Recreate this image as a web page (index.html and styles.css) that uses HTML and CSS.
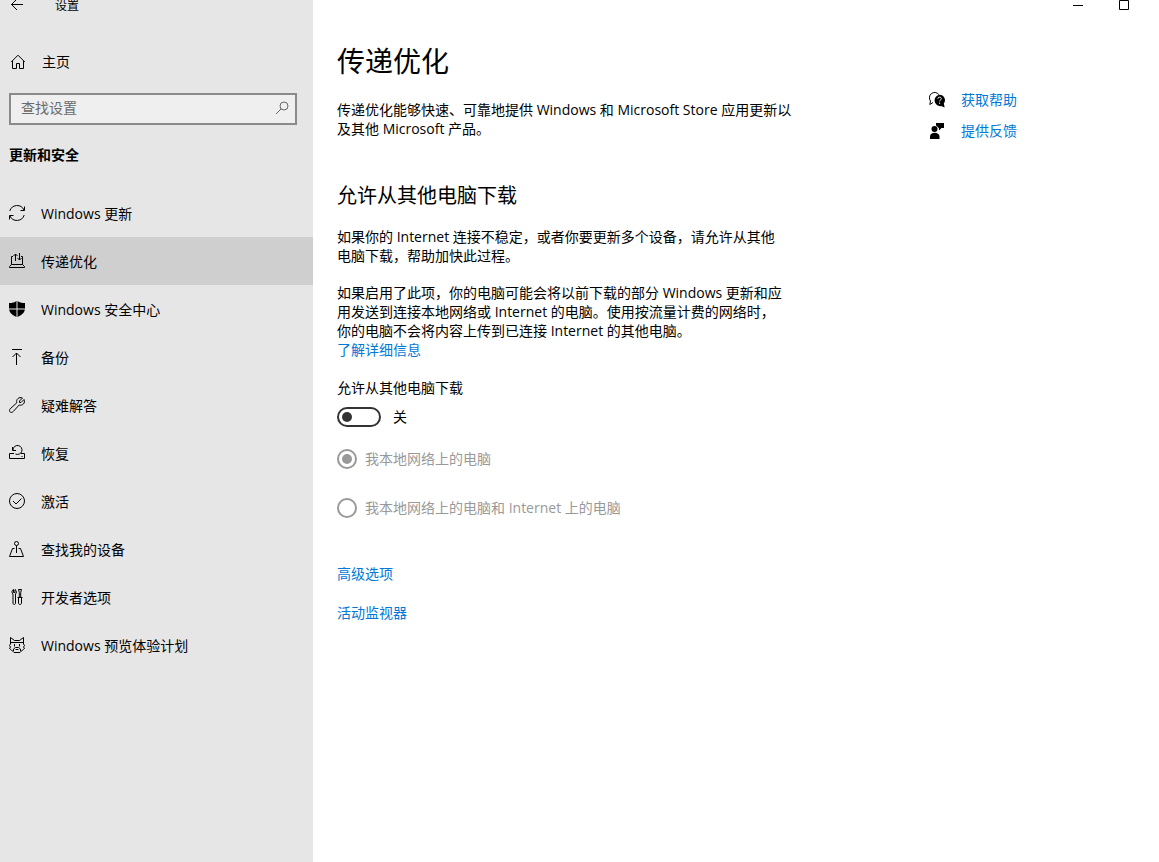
FILE: index.html
```html
<!DOCTYPE html>
<html lang="zh-CN">
<head>
<meta charset="utf-8">
<meta name="viewport" content="width=device-width, initial-scale=1">
<title>设置</title>
<link rel="stylesheet" href="styles.css">
</head>
<body>
<div class="app">
  <aside class="sidebar">
    <header class="titlebar">
      <button class="back" type="button" aria-label="返回">
        <svg class="icon" viewBox="0 0 16 16"><path d="M14 6.500H2.500M8 1L2.500 6.500 8 12"/></svg>
      </button>
      <span class="app-name">设置</span>
    </header>
    <a class="nav-item home" href="#">
      <svg class="icon" viewBox="0 0 16 16"><path d="M1.200 8L8 1.200 14.800 8M2.500 7v7.500h4v-5h3v5h4V7"/></svg>
      <span>主页</span>
    </a>
    <div class="search">
      <input class="search-input" type="search" placeholder="查找设置" aria-label="查找设置">
      <svg class="search-icon" viewBox="0 0 16 16"><circle cx="10" cy="6" r="4"/><path d="M7 9l-5 5"/></svg>
    </div>
    <h2 class="group">更新和安全</h2>
    <nav class="nav">
      <a class="nav-item" href="#">
        <svg class="icon" viewBox="0 0 16 16"><path d="M.8 6A7.600 7.600 0 0 1 15 5M15.500 1.500v4H11.500M15.200 10A7.600 7.600 0 0 1 1 11M.5 14.500v-4h4"/></svg>
        <span>Windows 更新</span>
      </a>
      <a class="nav-item selected" href="#" aria-current="page">
        <svg class="icon" viewBox="0 0 16 16"><path d="M4 3.500H2.500v8L.5 13.500v1h15v-1l-2-2v-8H12M2.500 11.500h11M6.500 8V1M4.500 3l2-2 2 2M10.500 0v7M8.500 5l2 2 2-2"/></svg>
        <span>传递优化</span>
      </a>
      <a class="nav-item" href="#">
        <svg class="icon solid" viewBox="0 0 16 16"><path d="M7.500 0v7.500H0V2C3.500 2 5.500 1.500 7.500 0zM8.500 0c2 1.500 4 2 7.500 2v5.500H8.500zM.1 8.500h7.400V16C3.500 14 .6 12 .1 8.500zM8.500 8.500h7.400C15.400 12 12.500 14 8.500 16z"/></svg>
        <span>Windows 安全中心</span>
      </a>
      <a class="nav-item" href="#">
        <svg class="icon" viewBox="0 0 16 16"><path d="M3 .5h10M7.500 16V4M3.500 8l4-4 4 4"/></svg>
        <span>备份</span>
      </a>
      <a class="nav-item" href="#">
        <svg class="icon" viewBox="0 0 16 16"><path d="M13.500 1L10.500 4v1.500H12L15 2.500c1.500 3.500-1.300 6.500-4.800 5.500L4.200 14.500C2 17-1 14 1.200 11.800L7.800 5.800C6.800 2.300 10 -.5 13.500 1z"/></svg>
        <span>疑难解答</span>
      </a>
      <a class="nav-item" href="#">
        <svg class="icon" viewBox="0 0 16 16"><path d="M5 8.500H.5v5h15v-5H12M4 5a4.500 4.500 0 1 1 2.500 4M3.500 2v3.500H7M12.500 11.500h1"/></svg>
        <span>恢复</span>
      </a>
      <a class="nav-item" href="#">
        <svg class="icon" viewBox="0 0 16 16"><circle cx="8" cy="8" r="7.500"/><path d="M4 8l3 3 5.500-5.500"/></svg>
        <span>激活</span>
      </a>
      <a class="nav-item" href="#">
        <svg class="icon" viewBox="0 0 16 16"><circle cx="7.500" cy="2.500" r="2"/><path d="M7.500 4.500V12M5.500 7.500h-2l-3 8h14l-3-8h-2"/></svg>
        <span>查找我的设备</span>
      </a>
      <a class="nav-item" href="#">
        <svg class="icon" viewBox="0 0 16 16"><path d="M4.500.5v3h1.500v-3c1.800 1 1.800 3.500.5 4.500v9c0 2-2.500 2-2.500 0V5C2.500 4 2.500 1.500 4.500.5zM9.500.5h3l-.8 3v5M9.500.5l.8 3v5M8.500 8.500h5M9.500 8.500V14c0 2 3 2 3 0V8.500"/></svg>
        <span>开发者选项</span>
      </a>
      <a class="nav-item" href="#">
        <svg class="icon" viewBox="0 0 16 16"><path d="M1.500 7V.5L5.500 3.500h5l4-3V7M1.500 5.500h13M1.500 7L.5 8.500l1 1.500-1 1.500L2.500 13l2.500 2.500h6l2.500-2.500 2-1.500-1-1.500 1-1.500-1-1.500M5.500 7v2.500M10.500 7v2.500M4.500 14v-2l2-1.500h3l2 1.500v2M6.500 12.500h3"/></svg>
        <span>Windows 预览体验计划</span>
      </a>
    </nav>
  </aside>

  <div class="page">
    <header class="window-bar">
      <button class="window-button" type="button" aria-label="最小化"><svg class="window-icon" viewBox="0 0 10 10"><path d="M0 5.500h10"/></svg></button>
      <button class="window-button" type="button" aria-label="最大化"><svg class="window-icon" viewBox="0 0 10 10"><path d="M.5.5h9v9h-9z"/></svg></button>
    </header>
    <div class="columns">
      <main class="content">
        <h1 class="title">传递优化</h1>
        <p class="text intro">传递优化能够快速、可靠地提供 Windows 和 Microsoft Store 应用更新以<br>及其他 Microsoft 产品。</p>
        <h2 class="subtitle">允许从其他电脑下载</h2>
        <p class="text">如果你的 Internet 连接不稳定，或者你要更新多个设备，请允许从其他<br>电脑下载，帮助加快此过程。</p>
        <p class="text">如果启用了此项，你的电脑可能会将以前下载的部分 Windows 更新和应<br>用发送到连接本地网络或 Internet 的电脑。使用按流量计费的网络时，<br>你的电脑不会将内容上传到已连接 Internet 的其他电脑。<br><a class="link" href="#">了解详细信息</a></p>
        <div class="setting">
          <label for="allow">允许从其他电脑下载</label>
          <div class="switch-row">
            <input class="switch" type="checkbox" role="switch" id="allow">
            <span>关</span>
          </div>
        </div>
        <div class="options" role="radiogroup" aria-label="下载来源">
          <label class="option"><input class="radio" type="radio" name="source" checked disabled>我本地网络上的电脑</label>
          <label class="option"><input class="radio" type="radio" name="source" disabled>我本地网络上的电脑和 Internet 上的电脑</label>
        </div>
        <div class="more">
          <a class="link" href="#">高级选项</a>
          <a class="link" href="#">活动监视器</a>
        </div>
      </main>
      <aside class="support">
        <a class="link support-link" href="#">
          <svg class="icon" viewBox="0 0 16 16"><path d="M4 10.500L.8 12.500l.7-3.500A5 5 0 1 1 9.800 2.500"/><path class="fill" d="M10.500 2.800a5.400 5.400 0 0 1 4.300 8.700l.9 4-3.600-1.400A5.500 5.500 0 1 1 10.500 2.800z"/><path class="mark" d="M8.800 6.800c0-2.300 3.500-2.100 3.500-.1 0 1.300-1.700 1.300-1.700 2.600M10.600 10.500v1.300"/></svg>
          <span>获取帮助</span>
        </a>
        <a class="link support-link" href="#">
          <svg class="icon solid" viewBox="0 0 16 16"><path d="M7 0h8v5h-2.500L10 7.500V5.500L8.800 4 7 2.500z"/><circle cx="5.500" cy="6" r="3"/><path d="M1 16v-2.500c0-5 9.500-5 9.500 0V16z"/></svg>
          <span>提供反馈</span>
        </a>
      </aside>
    </div>
  </div>
</div>
</body>
</html>
```
FILE: styles.css
```css
* { box-sizing: border-box; }

body {
  margin: 0;
  background: #fff;
  color: #000;
  font: 14px/20px "Open Sans", "Noto Sans CJK SC", sans-serif;
}

h1, h2, p { margin: 0; font-weight: 400; }
a { color: inherit; text-decoration: none; }
button { padding: 0; border: 0; background: none; color: inherit; font: inherit; }

.app { display: flex; min-height: 100vh; }

.sidebar { flex: 0 0 313px; background: #e6e6e6; }

.titlebar {
  display: flex;
  align-items: center;
  gap: 30px;
  height: 12px;
  padding-left: 9px;
  font-size: 12px;
  line-height: 12px;
}

.back { display: flex; }

.icon {
  flex: none;
  width: 16px;
  height: 16px;
  fill: none;
  stroke: #000;
  stroke-width: 1;
}

.solid, .fill { fill: #000; stroke: none; }
.mark { stroke: #fff; }

.nav-item {
  display: flex;
  align-items: center;
  gap: 16px;
  height: 48px;
  padding-left: 9px;
}

.nav span { padding-top: 2px; }

.home { margin-top: 26px; padding-left: 10px; }
.selected { background: #cfcfcf; }

.search {
  display: flex;
  align-items: center;
  height: 32px;
  margin: 7px 16px 0 9px;
  padding: 0 5px 2px 10px;
  border: 2px solid #8a8a8a;
  background: #efefef;
}

.search-input {
  flex: 1;
  min-width: 0;
  padding: 0;
  border: 0;
  outline: 0;
  background: none;
  font: inherit;
}

.search-input::placeholder { color: #6a6a6a; opacity: 1; }

.search-icon {
  width: 16px;
  height: 16px;
  fill: none;
  stroke: #666;
}

.group {
  margin: 20px 0 24px 9px;
  font-size: 14px;
  font-weight: 700;
}

.page { flex: 1; min-width: 0; }

.window-bar {
  display: flex;
  justify-content: flex-end;
  height: 10px;
  padding-right: 12px;
}

.window-button {
  display: flex;
  justify-content: center;
  width: 46px;
}

.window-icon {
  width: 10px;
  height: 10px;
  fill: none;
  stroke: #000;
}

.columns { display: flex; padding: 31px 24px 24px; }

.content { flex: 0 1 592px; }

.title { font-size: 28px; line-height: 40px; }

.text { margin-bottom: 18px; line-height: 19px; }
.intro { margin: 19px 0 44px; }

.subtitle { margin-bottom: 17px; font-size: 20px; line-height: 28px; }

.link { color: #0078d7; }

.setting { padding-top: 1px; }

.switch-row {
  display: flex;
  align-items: center;
  gap: 12px;
  margin-top: 9px;
}

.switch {
  display: flex;
  align-items: center;
  width: 44px;
  height: 20px;
  margin: 0;
  padding-left: 3px;
  border: 2px solid #333;
  border-radius: 10px;
  appearance: none;
}

.switch::before {
  width: 10px;
  height: 10px;
  border-radius: 50%;
  background: #333;
  content: "";
}

.options { display: grid; gap: 29px; margin-top: 22px; }

.option { display: flex; gap: 8px; color: #999; }

.radio {
  display: grid;
  place-items: center;
  width: 20px;
  height: 20px;
  margin: 0;
  border: 2px solid #999;
  border-radius: 50%;
  appearance: none;
}

.radio:checked::before {
  width: 10px;
  height: 10px;
  border-radius: 50%;
  background: #999;
  content: "";
}

.more {
  display: grid;
  justify-items: start;
  gap: 19px;
  margin-top: 46px;
}

.support {
  display: grid;
  align-content: start;
  gap: 11px;
  padding-top: 49px;
}

.support-link { display: flex; align-items: center; gap: 16px; }
```
